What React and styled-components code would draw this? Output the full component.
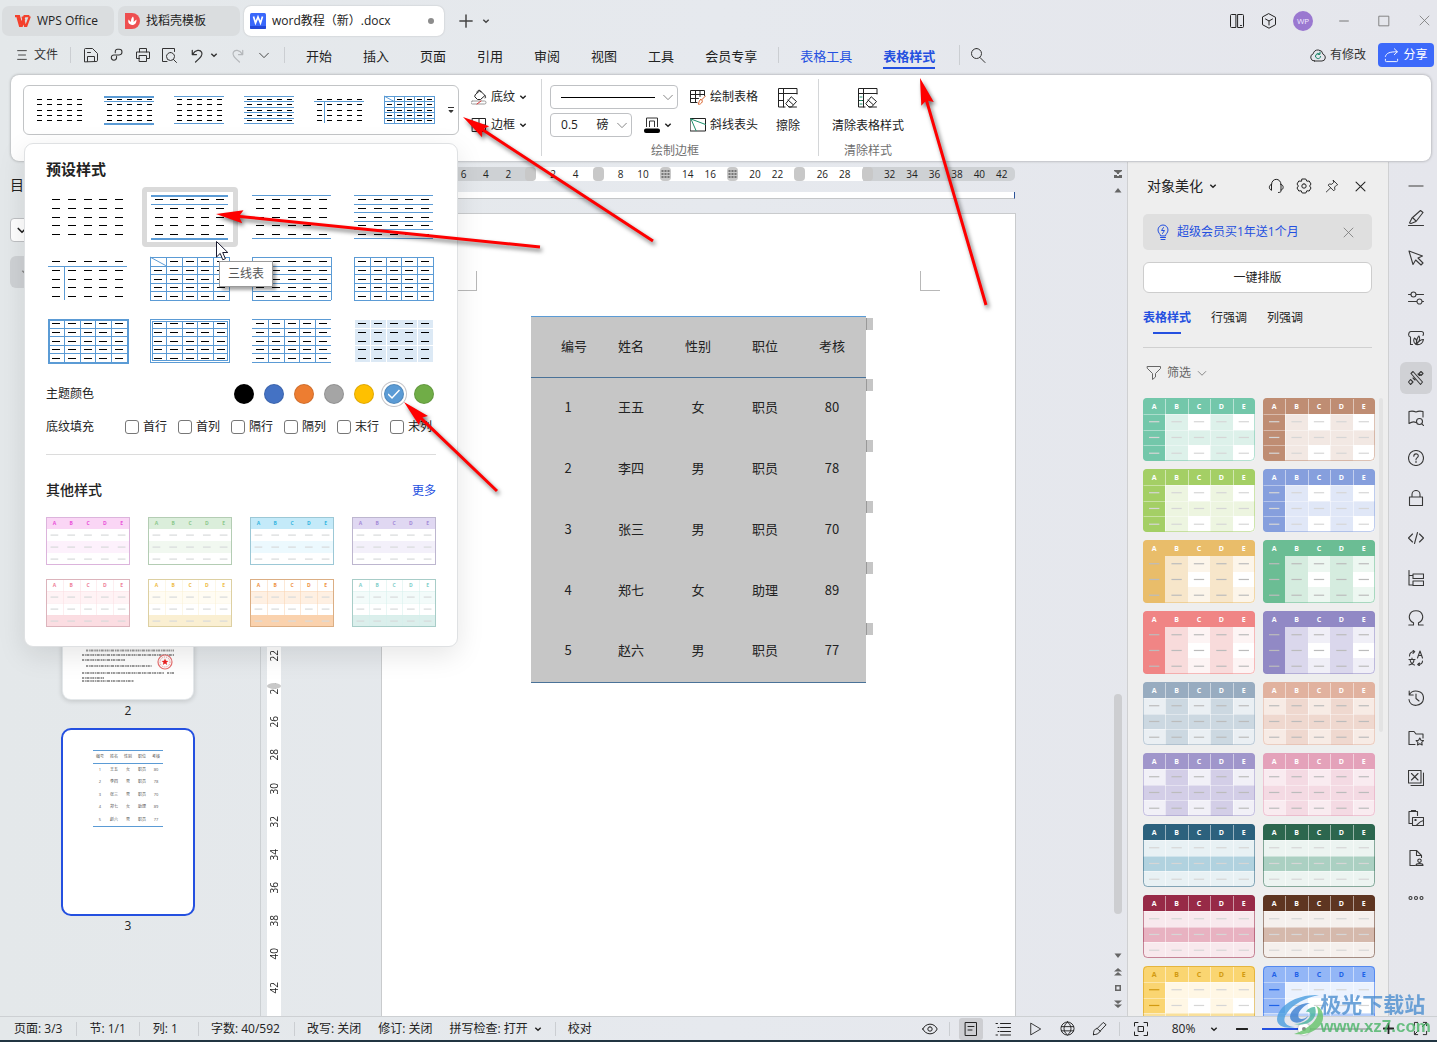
import React, { useState } from "react";
import styled, { createGlobalStyle, css } from "styled-components";

const BLUE = "#5b9bd5";
const ACCENT = "#2450e0";

const GlobalStyle = createGlobalStyle`
  * { box-sizing: border-box; }
  body {
    margin: 0;
    font-family: "Open Sans", "Noto Sans CJK SC", sans-serif;
    font-size: 12px;
    line-height: 18px;
    color: #222;
  }
  button, select, input {
    font: inherit;
    color: inherit;
    margin: 0;
    padding: 0;
    border: 0;
    background: none;
  }
  svg { display: block; flex: none; }
`;

/* ---------- icons ---------- */

const paths = {
  menu: "M3 3h10M4 8h8M3 13h10",
  save: "M1.5 14.5v-12a1 1 0 0 1 1-1h7l5 5v7a1 1 0 0 1-1 1zM4.5 14.5v-5h7v5M4.5 5.5h3",
  link: "M6 5.500v-1.500a2.500 2.500 0 0 1 2.500-2.500h2a3.200 3.200 0 0 1 0 6.400h-6a3 3 0 1 0 3 3v-1.400",
  printer: "M4.500 5v-3.500h7v3.500M4.500 11.500h-3v-6.500h13v6.500h-3M4.500 8.500h7v6h-7z",
  preview: "M6 14.500h-4.500v-13h12v3M9.500 5.500a4 4 0 1 1 0 8a4 4 0 1 1 0-8M12.500 12.500l3 3",
  undo: "M3.500 2.500v4.500h4.500M4 6.500c3-5 8-5 9.500-2s-1 5.500-6.500 10.500",
  redo: "M12.500 2.500v4.500h-4.500M12 6.500c-3-5-8-5-9.500-2s1 5.500 6.500 10.500",
  down: "M3 6l5 5 5-5",
  search: "M6.500 1.500a5 5 0 1 1 0 10a5 5 0 1 1 0-10M10 10.500l5 5",
  cloud: "M4.500 14h7.500a3.500 3.500 0 0 0 1-6.800a5 5 0 0 0-9.800-.4a3.700 3.700 0 0 0 1.300 7.200z",
  sync: "M10.500 9.500a2.500 2.500 0 1 1-1-2.500M7.800 7.300h2.200v-2.200",
  share: "M1.500 9c1-3.500 4-5 12.500-5M11 .8l3.300 3.200-3.300 3.200M1.500 12v1.500a1 1 0 0 0 1 1h11a1 1 0 0 0 1-1v-1.500",
  split: "M6.500 1.500h-4a1 1 0 0 0-1 1v11a1 1 0 0 0 1 1h4zM9 1.500h4.500a1 1 0 0 1 1 1v11a1 1 0 0 1-1 1h-4.500zM11.500 12.500h1",
  cube: "M8 .8l6.500 3.500v7.400l-6.500 3.500-6.500-3.500v-7.400zM4.500 6l3.500 2 3.500-2M8 8v4",
  minus: "M1 8h14",
  square: "M2.500 2.500h11v11h-11z",
  close: "M2.500 2.500l11 11M13.500 2.500l-11 11",
  plus: "M8 1v14M1 8h14",
  pail: "M4.500 5.500l4.500-4 5 5-4.500 4h-3l-2.500-2.500zM6 3.500c0-3 4-3 4-.5M14 6.500c1 1.500 1 2.500 0 2.500",
  pailBar: "M1.500 12h12a1.500 1.500 0 0 1 0 3h-12a1.500 1.500 0 0 1 0-3",
  border: "M1.500 1.500h13v13h-13zM8 1.500v13M1.500 8h13",
  drawTable: "M7 13.500h-6.500v-12h14v5M.5 5.500h14M.5 9.500h8M5.500 1.500v12M10 1.500v6",
  brush: "M15.500 7l-4 4M10.500 10.500c2 0 2.500 2 1 3.500s-3 1.500-3.500 1c1.500-1 .5-3.500 2.500-4.500",
  frame: "M.5 1.500h15v12.500h-15z",
  eraseTable: "M8 20h-6.500v-18.500h18.500v5.500M1.500 6.500h18.500M6.500 1.500v18.500M1.500 13.500h5M14.500 10l5 4.500-5 5.500h-2.500l-3-3zM11 13l5 4.500M12 20h7.500",
  headset: "M3.500 6.500c0-7 9.500-7 9.500 0M3.500 6.500v5.500M3.500 6.500c-3 0-3 5.500 0 5.500M13 6.500v6.500c0 1-1 1.500-2.500 1.500M13 6.500c3 0 3 5.500 0 5.500",
  gear: "M6.200 1h3.600l1 2.200 2.400-.2 1.800 3-1.400 2 1.400 2-1.800 3-2.400-.2-1 2.200h-3.600l-1-2.200-2.400.2-1.800-3 1.400-2-1.400-2 1.800-3 2.400.2zM8 5.800a2.200 2.200 0 1 1 0 4.400a2.200 2.200 0 1 1 0-4.400",
  pin: "M9.500 1.500l5 5-1.500.7-2 2 .2 3-1.200 1.300-6.500-6.500 1.300-1.200 3 .2 2-2zM6.500 10l-5 4.800",
  bulb: "M5.500 11.500c0-1.500-2.500-2.500-2.500-5.500a5 5 0 0 1 10 0c0 3-2.500 4-2.500 5.500zM5.500 13.500h5M6 15.500h4M8.500 3.500l-2 3h3l-2 3",
  filter: "M1.500 1.500h13v2l-5 5v3.500l-3 2.500v-6l-5-5z",
  pen: "M.5 15.500h15M1.500 13l2.500-5 8.500-7.500 2.500 2-7 9-5 2zM4.500 7.500l3.500 3.500",
  pointer: "M1 1l4 13.500 2.700-4.500 5.300 5 2-2-5-5 4.500-2z",
  sliders: "M.5 4.500h2.500M8 4.500h7.500M5.500 2a2.500 2.500 0 1 1 0 5a2.500 2.500 0 1 1 0-5M.5 11.500h8.500M14 11.500h1.500M11.500 9a2.500 2.500 0 1 1 0 5a2.500 2.500 0 1 1 0-5",
  shop: "M4.500 14.500h-2v-7.500c-3-.5-2-5.500.5-5.500h10.500c2 0 2.500 2 1.500 4M8 14.500c-3-2-2.500-5-1.500-6.500c2.500 1.500 2.500 4.500 1.500 6.500c.5-4 1-7 3-8.500c1.500 3 0 6.500-3 8.500c3 .5 6.500-.5 7.500-5c-3-.3-5 2-7.500 5",
  magic: "M3 3.500l2-2 9.500 10.500-2 2.500zM2.500 9.500l2.500 2.500-2.500 2.500-2-2.500zM13 1.500l2 2-2 2-2-2zM5 8l2 2M10 4l1.500 1.500",
  bookSearch: "M8 12.500c-2-1-4-1-7 1v-12c3-.8 5-.5 7 .5c2-1 4-1.300 7-.5v5.500M11.500 8.500a3 3 0 1 1 0 6a3 3 0 1 1 0-6M13.800 13.800l2 2",
  help: "M8 .5a7.500 7.500 0 1 1 0 15a7.500 7.500 0 1 1 0-15M5.800 6.200c0-3 4.500-3 4.500-.3c0 1.600-2.300 1.800-2.300 3.600M8 11v1.500",
  lock: "M1.500 7h13v8.500h-13zM4 7v-2.500a4 4 0 0 1 8 0v2.500",
  code: "M4.500 4l-4 4 4 4M11.500 4l4 4-4 4M9.500 2.500l-3 11",
  tree: "M1 .5v14.500h3.500M1 5.500h3.500M5 4h10.500v4.500h-10.500zM5 11h10.500v4.500h-10.500z",
  omega: "M.8 15h4.700v-2.200c-7-3.500-4.500-12 2.500-12s9.500 8.500 2.500 12v2.200h4.700",
  translate: "M1.500 6c0-3 2-4.500 5-4.500M5 .2l1.700 1.400-1.700 1.700M14.500 11c0 2.500-2 3.500-4.500 3.500M11.500 13l-1.800 1.500 1.800 1.300M9.500 8l2.500-7 2.500 7M10.500 5.500h3M1 9.500h6M4 8v1.500M6 9.500c0 3-2.500 5-5 5.500M2 9.500c.5 3 2.500 5 4.500 5.500",
  history: "M1.500 4.500c3-5.500 14-4.500 14 3.500c0 9-14 10-14.500 1.500M1.200 1v4h4M8 4v4.500l3 2.500",
  folderStar: "M7 14.500h-6v-13h5l2 2.500h7v4M11.800 8l1.200 2.300 2.500.3-1.800 1.700.5 2.600-2.400-1.200-2.300 1.200.4-2.600-1.800-1.700 2.500-.3z",
  boxX: "M.5 .5h12.500v12.500h-12.500zM3 15.500h12.500v-12.500M3.500 3.500l6.500 6.500M10 3.500l-6.500 6.500",
  clipImage: "M4 13.500h-3v-12h8.500v4M3.500 1.500v-1h4v1M4.500 7.500h11v8h-11zM7 9.500h1v1h-1zM8 15.500c2-1 3-4 7.500-5",
  docPerson: "M7 15.500h-5v-15h6.500l5 5v2M8.500 .5v5h5M11.500 9a1.700 1.700 0 1 1 0 3.400a1.700 1.700 0 1 1 0-3.400M8 15.500c0-2.500 7-2.500 7 0z",
  dots: "M2.500 6.500a1.500 1.500 0 1 1 0 3a1.500 1.500 0 1 1 0-3M8 6.500a1.500 1.500 0 1 1 0 3a1.500 1.500 0 1 1 0-3M13.500 6.500a1.500 1.500 0 1 1 0 3a1.500 1.500 0 1 1 0-3",
  eye: "M.8 8c3-6.500 11.400-6.500 14.400 0c-3 6.500-11.400 6.500-14.400 0zM8 5.800a2.200 2.200 0 1 1 0 4.400a2.200 2.200 0 1 1 0-4.400",
  page: "M2.500 1.500h11v13h-11zM5 5.500h6M5 9h4",
  list: "M5.500 2.500h10M5.500 6.500h10M5.500 10.500h10M5.500 14h10M1 2.500h1.500M3 6.500h1M3 10.500h1M1 14h1.500",
  play: "M3.500 1.500l11 6.500-11 6.500z",
  globe: "M8 1a7 7 0 1 1 0 14a7 7 0 1 1 0-14M8 1c-5 4-5 10 0 14c5-4 5-10 0-14M1.500 6h13M1.500 10.500h13",
  marker: "M1.500 14.500c0-4 1-6 4-6.500l6.500-6.500 3 2.500-6.500 7c-1.500 3-4 3.500-7 3.500zM5.500 8l3.500 3",
  fit: "M1.500 5v-3.500h3.500M11 1.500h3.500v3.500M14.500 11v3.500h-3.500M5 14.500h-3.500v-3.500M5.500 5.500h5v5h-5z",
  expand: "M1.500 5v-3.500h3.500M11 1.500h3.500v3.500M14.500 11v3.500h-3.500M5 14.500h-3.500v-3.500M10 6l4-4M6 10l-4 4",
};

function Icon({ name, size = 16, box = 16, color = "currentColor", weight = 1, children }) {
  return (
    <svg width={size} height={size} viewBox={`0 0 ${box} ${box}`} fill="none" stroke={color}
      strokeWidth={weight} strokeLinecap="round" strokeLinejoin="round" aria-hidden="true">
      <path d={paths[name]} />
      {children}
    </svg>
  );
}

const Caret = () => (
  <svg width="8" height="8" viewBox="0 0 8 8" fill="none" stroke="currentColor" strokeWidth="1.4" aria-hidden="true">
    <path d="M1.300 2.700l2.700 2.600 2.700-2.600" />
  </svg>
);

/* ---------- shared bits ---------- */

const PlainButton = styled.button`
  display: flex;
  align-items: center;
  justify-content: center;
  width: ${(p) => (p.$w ? `${p.$w}px` : "auto")};
  height: 24px;
  margin-left: ${(p) => p.$left || 0}px;
  gap: ${(p) => p.$gap || 0}px;
  color: ${(p) => p.$color || "inherit"};
  white-space: nowrap;
`;

const Rule = styled.span`
  width: 1px;
  height: ${(p) => p.$h || 16}px;
  background: #cbced2;
  margin: 0 ${(p) => p.$right || 0}px 0 ${(p) => p.$left || 0}px;
`;

const Spacer = styled.span`
  flex: 1;
`;

const Shell = styled.div`
  position: relative;
  display: flex;
  flex-direction: column;
  height: 100vh;
  overflow: hidden;
  background: linear-gradient(90deg, #e4e8ea 0%, #e6e9ee 50%, #e5e6ec 100%);
  border-bottom: 2px solid #213542;
`;

/* ---------- title bar ---------- */

const TitleBar = styled.header`
  display: flex;
  align-items: center;
  height: 41px;
  padding-left: 2px;
  gap: 4px;
`;

const DocTab = styled.div`
  display: flex;
  align-items: center;
  height: 30px;
  width: ${(p) => p.$w}px;
  padding: 0 10px 0 ${(p) => p.$pad}px;
  gap: 6px;
  border-radius: 7px;
  background: ${(p) => (p.$active ? "#fff" : "#dadddf")};
  box-shadow: ${(p) => (p.$active ? "0 0 2px rgba(0,0,0,.2)" : "none")};
  white-space: nowrap;
`;

const Dirty = styled.i`
  width: 6px;
  height: 6px;
  margin-left: auto;
  border-radius: 50%;
  background: #8c8c8c;
`;

const NewTab = styled.div`
  display: flex;
  gap: 2px;
  padding-left: 4px;
  color: #444;
`;

const Avatar = styled.button`
  width: 20px;
  height: 20px;
  margin: 0 4px 0 6px;
  border-radius: 50%;
  background: #9a78d0;
  color: #f0e8ff;
  font-size: 8px;
  line-height: 20px;
`;

const WindowButton = styled(PlainButton)`
  width: 26px;
  margin-left: 10px;
  color: #777;
`;

function TopTabs() {
  return (
    <TitleBar>
      <DocTab $w={112} $pad={13}>
        <svg width="16" height="12" viewBox="0 0 16 12" fill="none" stroke="#f4402c" strokeWidth="2.200">
          <path d="M0 1.200h4l2.500 8.500 3-8.500h4.800" />
          <path d="M2.500 2l2.500 8.800h1.800l2.500-7M7.500 1.500l2.500 9.300h1.300l3.500-9.500" />
        </svg>
        WPS Office
      </DocTab>
      <DocTab $w={122} $pad={7}>
        <svg width="15" height="16" viewBox="0 0 15 16">
          <path d="M0 0h7a8 8 0 0 1 0 16H0z" fill="#ee4f50" />
          <path d="M7 12c-4-1-4-3-3.500-5.500L6 9c0-3 .5-4 2-5.500 1 1.500 1 3.500.5 5.500l3-2.500c0 3-1 5.500-4.500 5.500z" fill="#fff" />
        </svg>
        找稻壳模板
      </DocTab>
      <DocTab $w={200} $pad={6} $active>
        <svg width="16" height="16" viewBox="0 0 16 16">
          <rect width="16" height="16" rx="1.500" fill="#3a68fb" />
          <path d="M0 13h16v2a1 1 0 0 1-1 1H1a1 1 0 0 1-1-1z" fill="#2448d8" />
          <path d="M3.500 3.500l2 6.500 2.500-6 2.500 6 2-6.500" fill="none" stroke="#fff" strokeWidth="1.700" />
        </svg>
        word教程（新）.docx
        <Dirty />
      </DocTab>
      <NewTab>
        <PlainButton $w={28} aria-label="新建"><Icon name="plus" size={14} weight={1.7} /></PlainButton>
        <PlainButton aria-label="标签列表"><Caret /></PlainButton>
      </NewTab>
      <Spacer />
      <PlainButton $w={28} aria-label="侧边栏"><Icon name="split" /></PlainButton>
      <PlainButton $w={28} aria-label="应用"><Icon name="cube" /></PlainButton>
      <Avatar>WP</Avatar>
      <WindowButton aria-label="最小化"><Icon name="minus" size={10} weight={1.6} /></WindowButton>
      <WindowButton aria-label="最大化"><Icon name="square" size={14} /></WindowButton>
      <WindowButton aria-label="关闭"><Icon name="close" size={13} /></WindowButton>
    </TitleBar>
  );
}

/* ---------- menu bar ---------- */

const MenuBar = styled.nav`
  display: flex;
  align-items: center;
  height: 28px;
  margin-bottom: 6px;
  padding: 0 3px 0 15px;
  color: #333;
`;

const MenuTab = styled.a`
  font-size: 13px;
  color: ${(p) => (p.$blue ? ACCENT : "#222")};
  font-weight: ${(p) => (p.$active ? 700 : 400)};
  text-decoration: none;
  margin-right: ${(p) => (p.$last ? 0 : 31)}px;
  white-space: nowrap;
  padding: 4px 0 2px;
  border-bottom: 2px solid ${(p) => (p.$active ? ACCENT : "transparent")};
  border-top: 2px solid transparent;
`;

const ShareButton = styled(PlainButton)`
  width: 56px;
  gap: 4px;
  border-radius: 4px;
  background: #3c69fa;
  color: #fff;
  margin-left: 12px;
`;

function Menu() {
  return (
    <MenuBar>
      <PlainButton $gap={5}><Icon name="menu" size={14} />文件</PlainButton>
      <Rule $left={12} $right={7} />
      <PlainButton $w={26} aria-label="保存"><Icon name="save" /></PlainButton>
      <PlainButton $w={26} aria-label="输出"><Icon name="link" size={14} weight={1.2} /></PlainButton>
      <PlainButton $w={26} aria-label="打印"><Icon name="printer" /></PlainButton>
      <PlainButton $w={26} aria-label="打印预览"><Icon name="preview" /></PlainButton>
      <PlainButton $w={28} aria-label="撤销"><Icon name="undo" size={15} weight={1.3} /></PlainButton>
      <PlainButton aria-label="撤销列表"><Caret /></PlainButton>
      <PlainButton $w={40} $color="#b4b7ba" aria-label="重做"><Icon name="redo" size={15} weight={1.3} /></PlainButton>
      <PlainButton $w={12} aria-label="更多工具"><Icon name="down" size={14} /></PlainButton>
      <Rule $left={14} $right={21} />
      {["开始", "插入", "页面", "引用", "审阅", "视图", "工具"].map((t) => (
        <MenuTab key={t} href="#">{t}</MenuTab>
      ))}
      <MenuTab href="#" $last>会员专享</MenuTab>
      <Rule $left={21} $right={21} />
      <MenuTab href="#" $blue>表格工具</MenuTab>
      <MenuTab href="#" $blue $active $last>表格样式</MenuTab>
      <Rule $left={24} $right={10} $h={20} />
      <PlainButton aria-label="搜索"><Icon name="search" /></PlainButton>
      <Spacer />
      <PlainButton $gap={4}>
        <Icon name="cloud"><path d={paths.sync} stroke="#108060" /></Icon>
        有修改
      </PlainButton>
      <ShareButton><Icon name="share" size={15} />分享</ShareButton>
    </MenuBar>
  );
}

/* ---------- table style glyphs ---------- */

const five = [0, 1, 2, 3, 4];

// 5x5 preview of a border preset; `kind` picks the ruled lines
function TableGlyph({ kind, w, h }) {
  const cw = w / 5;
  const rh = h / 5;
  const px = (n) => Math.round(n);
  const hLine = (i, t = 1) => <rect key={`h${i}`} x="0" y={px(i * rh)} width={w} height={t} />;
  const vLine = (i, from = 0) => <rect key={`v${i}`} x={px(i * cw)} y={from} width="1" height={h - from} />;
  const inner = [1, 2, 3, 4];
  const all = [0, 1, 2, 3, 4, 5];
  const gridded = ["diag", "grid", "thick", "double"].includes(kind);
  return (
    <svg width={w + 4} height={h + 4} viewBox={`-2 -2 ${w + 4} ${h + 4}`} shapeRendering="crispEdges" aria-hidden="true">
      <g fill={BLUE}>
        {kind === "three" && <>{hLine(0, 2)}{hLine(1)}{hLine(5, 2)}</>}
        {kind === "ends" && <>{hLine(0)}{hLine(5)}</>}
        {(kind === "rows" || kind === "boxrows") && all.map((i) => hLine(i))}
        {kind === "boxrows" && <>{vLine(0)}{vLine(5)}</>}
        {kind === "head" && <>{hLine(1)}{vLine(1, px(rh))}</>}
        {gridded && inner.map((i) => hLine(i))}
        {gridded && inner.map((i) => vLine(i))}
        {kind === "open" && <>{all.map((i) => hLine(i))}{inner.map((i) => vLine(i))}</>}
      </g>
      {kind === "double" && <rect x="1.500" y="1.500" width={w - 2} height={h - 2} fill="none" stroke="#fff" />}
      {gridded && (
        <rect x="0.500" y="0.500" width={w} height={h} fill="none" stroke={BLUE} strokeWidth={kind === "thick" ? 2 : 1} />
      )}
      {kind === "double" && <rect x="2.500" y="2.500" width={w - 4} height={h - 4} fill="none" stroke={BLUE} />}
      {kind === "diag" && <path d={`M0 0L${cw} ${rh}`} stroke={BLUE} shapeRendering="auto" />}
      {kind === "fill" && five.map((r) => five.map((c) => (
        <rect key={`${r}${c}`} x={px(c * cw) + 1} y={px(r * rh) + 1} width={px(cw) - 1} height={px(rh) - 1} fill="#dce9f5" />
      )))}
      {five.map((r) => five.map((c) => {
        if (kind === "diag" && r === 0 && c === 0) return null;
        return <rect key={`d${r}${c}`} x={px(c * cw + cw / 4)} y={px(r * rh + rh / 2)} width={px(cw / 2)} height="1" fill="#000" />;
      }))}
    </svg>
  );
}

// Coloured table thumbnail. `rows` holds three rows of five fills.
function Swatch({ w, h, head, letter, rows, lines, headLines, edge, dash, firstDash, radius }) {
  const cw = w / 5;
  const rh = h / 4;
  const big = w > 100;
  const size = big ? 7 : 5;
  const id = `clip${head}${letter}`.replace(/#/g, "");
  return (
    <svg width={w} height={h} viewBox={`0 0 ${w} ${h}`} aria-hidden="true">
      <clipPath id={id}><rect width={w} height={h} rx={radius} /></clipPath>
      <g clipPath={`url(#${id})`}>
        <g shapeRendering="crispEdges">
          <rect width={w} height={Math.ceil(rh)} fill={head} />
          {rows.map((cells, r) => cells.map((fill, c) => (
            <rect key={`${r}${c}`} x={Math.round(c * cw)} y={Math.round((r + 1) * rh)} width={Math.ceil(cw)} height={Math.ceil(rh)} fill={fill} />
          )))}
          {[1, 2, 3, 4].map((c) => (
            <rect key={c} x={Math.round(c * cw)} y={headLines ? 1 : rh} width="1" height={h - (headLines ? 1 : rh)} fill={lines} opacity=".5" />
          ))}
          {[1, 2, 3].map((r) => <rect key={r} y={Math.round(r * rh)} width={w} height="1" fill={lines} opacity=".4" />)}
        </g>
        {five.map((c) => (
          <text key={c} x={(c + 0.5) * cw} y={rh / 2 + (big ? 3 : 2)} fontSize={size} fontWeight="700" textAnchor="middle" fill={letter}>
            {"ABCDE"[c]}
          </text>
        ))}
        {rows.map((cells, r) => cells.map((fill, c) => (
          <rect key={`${r}${c}`} x={(c + 0.27) * cw} y={(r + 1.5) * rh - 0.5} width={cw * 0.46} height="1.200"
            fill={c === 0 && firstDash ? firstDash : dash} />
        )))}
      </g>
      <rect x=".5" y=".5" width={w - 1} height={h - 1} rx={radius} fill="none" stroke={edge} />
    </svg>
  );
}

/* ---------- ribbon ---------- */

const RibbonBar = styled.section`
  position: relative;
  z-index: 3;
  display: flex;
  height: 86px;
  margin: 0 6px 1px 11px;
  padding: 10px 12px 0;
  border-radius: 8px;
  background: #fff;
  box-shadow: 0 0 3px rgba(0, 0, 0, 0.35);
  white-space: nowrap;
`;

const Gallery = styled.div`
  display: flex;
  align-items: center;
  width: 436px;
  height: 50px;
  margin-right: 12px;
  border: 1px solid #c2c4c6;
  border-radius: 6px;
`;

const GalleryItem = styled(PlainButton)`
  width: 70px;
  height: 40px;
  padding-bottom: 1px;
`;

const Group = styled.div`
  display: flex;
  flex-direction: column;
  align-items: center;
`;

const GroupBody = styled.div`
  display: flex;
  gap: 12px;
  height: 52px;
  margin-bottom: 5px;
`;

const Caption = styled.span`
  color: #707070;
`;

const Stack = styled.div`
  display: flex;
  flex-direction: column;
  align-items: flex-start;
  gap: 4px;
`;

const Row = styled.div`
  display: flex;
  gap: 12px;
`;

const BigButton = styled.button`
  display: flex;
  flex-direction: column;
  align-items: center;
  justify-content: space-between;
  padding: 2px 0;
  margin-left: ${(p) => p.$left || 0}px;
`;

const GroupRule = styled.span`
  width: 1px;
  height: 77px;
  margin: -6px ${(p) => p.$right}px 0 ${(p) => p.$left}px;
  background: #d4d6d8;
`;

const Combo = styled.label`
  position: relative;
  display: flex;
  align-items: center;
  justify-content: space-between;
  width: ${(p) => p.$w}px;
  height: 24px;
  padding: 0 2px 0 10px;
  border: 1px solid #bfc1c4;
  border-radius: 4px;
  background: #fff;
  select {
    flex: 1;
    appearance: none;
    outline: none;
  }
`;

const HiddenSelect = styled.select`
  position: absolute;
  inset: 0;
  opacity: 0;
`;

const LineSample = styled.span`
  flex: 1;
  height: 1px;
  margin-right: 6px;
  background: #000;
`;

function Ribbon() {
  return (
    <RibbonBar>
      <Gallery>
        {["none", "three", "ends", "rows", "head", "diag"].map((k) => (
          <GalleryItem key={k} aria-label={k}><TableGlyph kind={k} w={50} h={27} /></GalleryItem>
        ))}
        <PlainButton $w={14} aria-label="展开样式">
          <svg width="8" height="8" viewBox="0 0 8 8"><path d="M1 1.500h6M2 4.500h4l-2 2z" stroke="#333" fill="#333" /></svg>
        </PlainButton>
      </Gallery>
      <Stack>
        <PlainButton $gap={4}>
          <Icon name="pail"><path d={paths.pailBar} stroke="#999" /><path d="M6 15l4-3" stroke="#d33" /></Icon>底纹<Caret />
        </PlainButton>
        <PlainButton $gap={4}><Icon name="border" />边框<Caret /></PlainButton>
      </Stack>
      <GroupRule $left={14} $right={8} />
      <Group>
        <GroupBody>
          <Stack>
            <Combo $w={128}>
              <LineSample />
              <Icon name="down" size={14} color="#777" />
              <HiddenSelect aria-label="线型"><option>实线</option></HiddenSelect>
            </Combo>
            <Row>
              <Combo $w={82}>
                <select aria-label="线宽"><option>{"0.5\u00a0\u00a0\u00a0\u00a0\u00a0\u00a0磅"}</option></select>
                <Icon name="down" size={14} color="#777" />
              </Combo>
              <PlainButton $gap={4} aria-label="边框颜色">
                <svg width="16" height="16" viewBox="0 0 16 16" fill="none" stroke="#333">
                  <path d="M2.500 10v-9h11v9M5.500 10v-6h5v6" />
                  <rect x="0" y="11.500" width="16" height="4.500" rx="2" fill="#000" stroke="none" />
                </svg>
                <Caret />
              </PlainButton>
            </Row>
          </Stack>
          <Stack>
            <PlainButton $gap={4}><Icon name="drawTable"><path d={paths.brush} stroke="#d9622b" /></Icon>绘制表格</PlainButton>
            <PlainButton $gap={4}>
              <Icon name="frame"><path d="M1 2l5 11.500M1 2l14.500 5.500" stroke="#1a8f6b" /></Icon>斜线表头
            </PlainButton>
          </Stack>
          <BigButton $left={6}><Icon name="eraseTable" size={22} box={22} />擦除</BigButton>
        </GroupBody>
        <Caption>绘制边框</Caption>
      </Group>
      <GroupRule $left={18} $right={13} />
      <Group>
        <GroupBody>
          <BigButton>
            <Icon name="eraseTable" size={22} box={22}><path d="M3 10h2M3 13.500h2M3 17h2" stroke="#1a8f6b" /></Icon>
            清除表格样式
          </BigButton>
        </GroupBody>
        <Caption>清除样式</Caption>
      </Group>
      <StylePopup />
    </RibbonBar>
  );
}

/* ---------- preset popup ---------- */

const Popup = styled.div`
  position: absolute;
  z-index: 5;
  top: 68px;
  left: 13px;
  width: 434px;
  padding: 15px 21px 19px;
  border: 1px solid #dfe1e3;
  border-radius: 9px;
  background: #fff;
  box-shadow: 0 8px 28px rgba(0, 0, 0, 0.1);
`;

const PopupTitle = styled.h2`
  margin: 0;
  font-size: ${(p) => p.$size}px;
  line-height: 20px;
  font-weight: ${(p) => (p.$size > 14 ? 700 : 500)};
`;

const PresetGrid = styled.div`
  display: grid;
  grid-template-columns: repeat(4, 96px);
  gap: 2px 6px;
  margin: 8px -6px 11px;
`;

const Preset = styled.button`
  display: flex;
  align-items: center;
  justify-content: center;
  height: 60px;
  padding: 0 2px 2px 0;
  border: 5px solid ${(p) => (p.$on ? "#dadada" : "transparent")};
  border-radius: 4px;
`;

const OptionRow = styled.div`
  display: flex;
  align-items: center;
  height: ${(p) => p.$h}px;
  padding-right: 2px;
`;

const Colors = styled.div`
  display: flex;
  gap: 10px;
  margin-left: auto;
`;

const Color = styled.label`
  position: relative;
  width: 20px;
  height: 20px;
  border-radius: 50%;
  background: ${(p) => p.$color};
  ${(p) => p.$on && css`box-shadow: 0 0 0 2px #fff, 0 0 0 3px #c4c4c8;`}
  border: 1px solid rgba(0, 0, 0, 0.12);
  input { position: absolute; opacity: 0; }
  svg { margin: 3px; }
`;

const Tick = styled.label`
  display: flex;
  align-items: center;
  gap: 4px;
  width: 53px;
  white-space: nowrap;
  input {
    appearance: none;
    width: 14px;
    height: 14px;
    border: 1px solid #777;
    border-radius: 3px;
    background: #fff;
  }
  input:checked { background: ${ACCENT}; }
`;

const Ticks = styled.div`
  display: flex;
  margin: 0 -10px 0 31px;
`;

const PopupRule = styled.hr`
  height: 1px;
  margin: 7px 0 25px;
  border: 0;
  background: #dcdcdc;
`;

const OtherHead = styled.div`
  display: flex;
  justify-content: space-between;
  height: 20px;
  margin-bottom: 17px;
`;

const MoreLink = styled.a`
  line-height: 22px;
  color: ${ACCENT};
  text-decoration: none;
`;

const OtherGrid = styled.div`
  display: grid;
  grid-template-columns: repeat(4, 84px);
  gap: 14px 18px;
`;

const SwatchButton = styled.button`
  display: block;
`;

const Tooltip = styled.div`
  position: absolute;
  top: 117px;
  left: 194px;
  padding: 3px 8px;
  border: 1px solid #9a9a9a;
  background: #fff;
  color: #575757;
  box-shadow: 3px 3px 3px rgba(0, 0, 0, 0.35);
`;

const Cursor = styled.svg`
  position: absolute;
  top: 97px;
  left: 191px;
`;

const presets = ["none", "three", "ends", "rows", "head", "diag", "boxrows", "grid", "thick", "double", "open", "fill"];
const themeColors = ["#000000", "#4472c4", "#ed7d31", "#a5a5a5", "#ffc000", "#5b9bd5", "#70ad47"];
const fills = ["首行", "首列", "隔行", "隔列", "末行", "末列"];

const row = (c) => [c, c, c, c, c];

const others = [
  { head: "#fad6f5", letter: "#e94fd8", mid: "#fdf1fc", edge: "#dcb4dc" },
  { head: "#dbeedb", letter: "#8cc88c", mid: "#f1f8f0", edge: "#b4cdb4" },
  { head: "#c4eaf9", letter: "#35b5e0", mid: "#ecf9fe", edge: "#9cc8d6" },
  { head: "#e0d8f2", letter: "#a48ad8", mid: "#f3f0fa", edge: "#bdb6cf" },
  { letter: "#ee7f98", first: "#fff3f5", last: "#fbdde2", edge: "#dcb4bc", lines: "#fbdde2" },
  { letter: "#eebb45", first: "#fffcf3", last: "#faefd2", edge: "#ddd0a2", lines: "#faefd2" },
  { letter: "#ee9140", first: "#fef0e3", last: "#fad2ae", edge: "#dbae84", lines: "#fad2ae" },
  { letter: "#82cec9", first: "#f3fbfa", last: "#dbefec", edge: "#a8cdc8", lines: "#d4efec" },
];

function StylePopup() {
  const [preset, setPreset] = useState("three");
  const [theme, setTheme] = useState(BLUE);

  return (
    <Popup>
      <PopupTitle $size={15}>预设样式</PopupTitle>
      <PresetGrid>
        {presets.map((k) => (
          <Preset key={k} $on={k === preset} onClick={() => setPreset(k)} aria-label={k}>
            <TableGlyph kind={k} w={k === "three" ? 77 : 79} h={43} />
          </Preset>
        ))}
      </PresetGrid>
      <OptionRow $h={24}>
        主题颜色
        <Colors>
          {themeColors.map((c) => (
            <Color key={c} $color={c} $on={c === theme}>
              <input type="radio" name="theme" aria-label={c} checked={c === theme} onChange={() => setTheme(c)} />
              {c === theme && (
                <svg width="12" height="12" viewBox="0 0 12 12" fill="none" stroke="#fff" strokeWidth="1.500"><path d="M0 6l4 4 7.500-8" /></svg>
              )}
            </Color>
          ))}
        </Colors>
      </OptionRow>
      <OptionRow $h={41}>
        底纹填充
        <Ticks>
          {fills.map((f) => <Tick key={f}><input type="checkbox" />{f}</Tick>)}
        </Ticks>
      </OptionRow>
      <PopupRule />
      <OtherHead>
        <PopupTitle $size={14}>其他样式</PopupTitle>
        <MoreLink href="#">更多</MoreLink>
      </OtherHead>
      <OtherGrid>
        {others.map((o) => (
          <SwatchButton key={o.letter} aria-label="表格样式">
            <Swatch w={84} h={48} radius={0} head={o.head || "#fff"} letter={o.letter} edge={o.edge} dash="#d8dadb"
              rows={o.head ? [row("#fff"), row(o.mid), row("#fff")] : [row(o.first), row("#fff"), row(o.last)]}
              lines={o.lines || "none"} headLines={!o.head} />
          </SwatchButton>
        ))}
      </OtherGrid>
      <Tooltip role="tooltip">三线表</Tooltip>
      <Cursor width="13" height="20" viewBox="0 0 13 20">
        <path d="M.5 .5v15.500l3.700-3.600 2.600 6.400 2.600-1.100-2.700-6.200h5.100z" fill="#fff" stroke="#1a1a30" />
      </Cursor>
    </Popup>
  );
}

/* ---------- navigation pane ---------- */

const Body = styled.div`
  display: flex;
  flex: 1;
  min-height: 0;
`;

const NavPane = styled.aside`
  width: 261px;
  padding: 14px 0 0 10px;
  border-right: 1px solid #ccd0d3;
  overflow: hidden;
`;

const NavTitle = styled.h2`
  margin: 0 0 24px;
  font-size: 14px;
  line-height: 18px;
  font-weight: 400;
`;

const NavCombo = styled(Combo)`
  justify-content: flex-start;
  margin-bottom: 14px;
  padding-left: 5px;
`;

const NavItem = styled(PlainButton)`
  width: 240px;
  height: 32px;
  justify-content: flex-start;
  padding-left: 11px;
  border-radius: 6px;
  background: #cfd2d5;
  color: #888;
  margin-bottom: 10px;
`;

const Thumbs = styled.ol`
  margin: 0;
  padding: 0 14px 0 0;
  list-style: none;
  display: flex;
  flex-direction: column;
  align-items: center;
`;

const Thumb = styled.div`
  width: 134px;
  height: 188px;
  padding: 20px 30px;
  border: 2px solid ${(p) => (p.$on ? ACCENT : "transparent")};
  border-radius: 10px;
  background: #fff;
  background-clip: padding-box;
  box-shadow: ${(p) => (p.$on ? "none" : "0 1px 4px rgba(0,0,0,.12)")};
`;

const ThumbLabel = styled.div`
  height: 27px;
  line-height: 19px;
  text-align: center;
`;

const MiniTable = styled.div`
  display: grid;
  grid-template-columns: repeat(5, 1fr);
  grid-auto-rows: 1fr;
  height: 77px;
  border: solid ${BLUE};
  border-width: 1px 0;
  font-size: 4px;
  line-height: 12px;
  text-align: center;
  color: #555;
  span:nth-child(-n + 5) { border-bottom: 1px solid ${BLUE}; }
`;

const MiniPage = styled.div`
  display: flex;
  justify-content: center;
  padding-top: 112px;
`;

const records = [
  ["编号", "姓名", "性别", "职位", "考核"],
  ["1", "王五", "女", "职员", "80"],
  ["2", "李四", "男", "职员", "78"],
  ["3", "张三", "男", "职员", "70"],
  ["4", "郑七", "女", "助理", "89"],
  ["5", "赵六", "男", "职员", "77"],
];

function Navigation() {
  return (
    <NavPane>
      <NavTitle>目录</NavTitle>
      <NavCombo $w={120}>
        <Icon name="down" size={12} weight={2.2} />
        <HiddenSelect aria-label="视图"><option>缩略图</option></HiddenSelect>
      </NavCombo>
      <NavItem aria-label="展开"><Caret /></NavItem>
      <Thumbs>
        <li><Thumb /><ThumbLabel>1</ThumbLabel></li>
        <li>
          <Thumb>
            <MiniPage>
              <svg width="94" height="42" viewBox="0 0 94 42">
                <g stroke="#999" strokeWidth="2" strokeDasharray="2 .8 1 .6 3 .9 1.500 .5">
                  <path d="M5 3.500h88M1 8h92M1 13h43M5 19h66M1 26h82M86 26h7M1 31h22M1 34h52" />
                </g>
                <g fill="none" stroke="#e77070" strokeWidth="1.200">
                  <circle cx="84" cy="15" r="7" fill="#fff" />
                  <circle cx="84" cy="15" r="5" strokeWidth=".8" strokeDasharray="1 1" />
                  <path d="M84 11.500l1 2.300 2.400.1-1.900 1.600.7 2.400-2.200-1.300-2.200 1.300.7-2.400-1.900-1.600 2.400-.1z" fill="#e22" stroke="none" />
                </g>
              </svg>
            </MiniPage>
          </Thumb>
          <ThumbLabel>2</ThumbLabel>
        </li>
        <li>
          <Thumb $on>
            <MiniTable>
              {records.flat().map((t, i) => <span key={i}>{t}</span>)}
            </MiniTable>
          </Thumb>
          <ThumbLabel>3</ThumbLabel>
        </li>
      </Thumbs>
    </NavPane>
  );
}

/* ---------- document ---------- */

const VRuler = styled.div`
  width: 14px;
  margin-left: 6px;
  padding-top: 145px;
  overflow: hidden;
  background: #fff;
`;

const VScale = styled.div`
  display: grid;
  grid-auto-rows: 1fr;
  height: 697px;
  font-size: 10px;
  line-height: 14px;
`;

const VTick = styled.div`
  position: relative;
  display: flex;
  align-items: center;
  justify-content: center;
  span {
    writing-mode: vertical-rl;
    transform: rotate(180deg);
  }
  i {
    position: absolute;
    top: 11px;
    width: 14px;
    height: 6px;
    border-radius: 50%;
    background: #c8c8c8;
  }
`;

const Canvas = styled.main`
  flex: 1;
  display: flex;
  flex-direction: column;
  align-items: center;
  min-width: 0;
  padding-left: 2px;
`;

const HRuler = styled.div`
  display: grid;
  grid-auto-flow: column;
  grid-auto-columns: 1fr;
  flex: none;
  width: 634px;
  height: 14px;
  margin: 5px 0 11px;
  padding: 0 2px 0 4px;
  border-radius: 5px;
  background: linear-gradient(90deg, #ced1d4 24%, #fff 24% 76%, #ced1d4 76%);
  font-size: 10px;
  line-height: 14px;
`;

const HTick = styled.div`
  display: flex;
  align-items: center;
  justify-content: center;
`;

const Stop = styled.i`
  width: 11px;
  height: 14px;
  border-radius: 4px;
  background: #c8c8c8;
`;

const PrevPage = styled.div`
  flex: none;
  width: 634px;
  height: 7px;
  margin-bottom: 14px;
  border-right: 1px solid #2a5298;
  border-bottom: 1px solid #c4c6c8;
  background: #fff;
`;

const Page = styled.article`
  flex: 1;
  width: 635px;
  border: 1px solid #c9cbcd;
  border-bottom: 0;
  background: #fff;
`;

const Margins = styled.div`
  display: flex;
  align-items: flex-end;
  justify-content: space-between;
  height: 77px;
  margin-bottom: 25px;
  padding: 0 75px;
`;

const Corner = styled.span`
  width: 20px;
  height: 20px;
  border-bottom: 1px solid #b8b8b8;
  border-${(p) => p.$side}: 1px solid #b8b8b8;
`;

const DocTable = styled.table`
  width: 335px;
  margin: 0 auto;
  border-collapse: collapse;
  table-layout: fixed;
  border-top: 1px solid ${BLUE};
  border-bottom: 1px solid #4a7298;
  background: #c6c6c6;
  font-family: "Noto Sans CJK SC", sans-serif;
  font-size: 13px;
  text-align: center;
  thead { border-bottom: 1px solid #4a7298; }
  th, td {
    position: relative;
    height: 61px;
    padding: 0 0 3px;
    font-weight: 400;
  }
  th:first-child { padding-left: 20px; }
  td:first-child { padding-left: 8px; }
`;

const RowHandle = styled.i`
  position: absolute;
  top: 1px;
  right: -7px;
  width: 7px;
  height: 12px;
  border-left: 1px solid #999;
  background: #c6c6c6;
`;

const ScrollColumn = styled.div`
  display: flex;
  flex-direction: column;
  align-items: center;
  gap: 8px;
  width: 14px;
  padding: 8px 5px 8px 0;
  color: #666;
`;

const Track = styled.div`
  display: flex;
  flex-direction: column;
  flex: 1;
  &::before { content: ""; flex: 499; }
  &::after { content: ""; flex: 30; }
`;

const ScrollThumb = styled.div`
  flex: 224;
  width: 8px;
  border-radius: 4px;
  background: #cdced1;
`;

const Mark = ({ d }) => (
  <svg width="8" height="8" viewBox="0 0 8 8" fill="currentColor" aria-hidden="true"><path d={d} fillRule="evenodd" /></svg>
);

const hTicks = [];
for (let n = -12; n <= 42; n += 2) hTicks.push(n);
const vTicks = [];
for (let n = 2; n <= 42; n += 2) vTicks.push(n);

function GridStop() {
  return (
    <svg width="11" height="14" viewBox="0 0 11 14">
      <rect width="11" height="14" rx="4" fill="#c8c8c8" />
      <path d="M1.500 4h8M1.500 7h8M1.500 10h8" stroke="#777" strokeWidth="2" strokeDasharray="2 1" />
    </svg>
  );
}

function Document() {
  const [head, ...rows] = records;
  return (
    <>
      <VRuler>
        <VScale>
          {vTicks.map((n) => <VTick key={n}><span>{n}</span>{n === 24 && <i />}</VTick>)}
        </VScale>
      </VRuler>
      <Canvas>
        <HRuler>
          {hTicks.map((n) => (
            <HTick key={n}>
              {[0, 6, 24, 30].includes(n) ? <Stop /> : n === 12 || n === 18 ? <GridStop /> : Math.abs(n)}
            </HTick>
          ))}
        </HRuler>
        <PrevPage />
        <Page>
          <Margins><Corner $side="right" /><Corner $side="left" /></Margins>
          <DocTable>
            <thead>
              <tr>{head.map((t, i) => <th key={t}>{t}{i === 4 && <RowHandle />}</th>)}</tr>
            </thead>
            <tbody>
              {rows.map((r) => (
                <tr key={r[0]}>{r.map((t, i) => <td key={i}>{t}{i === 4 && <RowHandle />}</td>)}</tr>
              ))}
            </tbody>
          </DocTable>
        </Page>
      </Canvas>
      <ScrollColumn>
        <Mark d="M0 0h8v1L5 3v1H3V3L0 1zM0 5h3v1h2V5h3v3H0z" />
        <Mark d="M4 2l3.500 4.500h-7z" />
        <Track><ScrollThumb /></Track>
        <Mark d="M4 6L.5 1.500h7z" />
        <Mark d="M4 0l4 3.500H0zM4 4l4 3.500H0z" />
        <Mark d="M1 1h6v6H1zM2.500 2.500v3h3v-3z" />
        <Mark d="M4 4L0 .5h8zM4 8L0 4.500h8z" />
      </ScrollColumn>
    </>
  );
}

/* ---------- beautify pane ---------- */

const Pane = styled.aside`
  width: 262px;
  padding: 12px 0 0 15px;
  border: solid #cfd0d2;
  border-width: 0 1px;
  background: #eeeeee;
  overflow: hidden;
`;

const PaneHead = styled.div`
  display: flex;
  align-items: center;
  height: 24px;
  padding: 0 14px 0 4px;
  margin-bottom: 16px;
`;

const PaneTitle = styled.button`
  display: flex;
  align-items: center;
  gap: 6px;
  font-size: 14px;
`;

const Promo = styled.div`
  display: flex;
  align-items: center;
  width: 229px;
  height: 36px;
  margin-bottom: 12px;
  padding: 0 12px;
  gap: 6px;
  border-radius: 5px;
  background: #dfdfdf;
  color: ${ACCENT};
`;

const LayoutButton = styled.button`
  display: block;
  width: 229px;
  height: 31px;
  border: 1px solid #cdcdcd;
  border-radius: 6px;
  background: #fff;
  margin-bottom: 13px;
`;

const PaneTabs = styled.div`
  display: flex;
  gap: 20px;
  width: 229px;
  height: 42px;
  margin-bottom: 15px;
  border-bottom: 1px solid #d0d0d0;
`;

const PaneTab = styled.button`
  display: flex;
  flex-direction: column;
  align-items: center;
  gap: 3px;
  height: 28px;
  line-height: 23px;
  ${(p) => p.$on && css`
    color: ${ACCENT};
    font-weight: 700;
    &::after {
      content: "";
      flex: none;
      width: 28px;
      height: 2px;
      background: ${ACCENT};
    }
  `}
`;

const Filter = styled.button`
  display: flex;
  align-items: center;
  gap: 5px;
  height: 20px;
  margin: 0 0 15px 3px;
  color: #666;
`;

const StyleList = styled.div`
  display: flex;
  gap: 4px;
`;

const StyleGrid = styled.div`
  display: grid;
  grid-template-columns: 112px 112px;
  gap: 8px;
`;

const ListBar = styled.span`
  width: 4px;
  height: 334px;
  border-radius: 2px;
  background: #e3e3e3;
`;

const W = "#ffffff";
const patterns = {
  checker: (c) => [[c.main, c.mid, W, c.mid, W], [c.main, ...row(c.mid).slice(1)], [c.main, c.mid, W, c.mid, W]],
  columns: (c) => [[c.main, c.mid, c.low, c.mid, c.low], [c.main, c.mid, W, c.mid, W], [c.main, c.mid, c.low, c.mid, c.low]],
  cross: (c) => [[c.low, c.mid, c.low, c.mid, c.low], row(c.mid), [c.low, c.mid, c.low, c.mid, c.low]],
  band: (c) => [row(c.low), row(c.mid), row(c.low)],
  total: (c) => [[c.main, c.low, c.low, c.low, c.low], [c.main, c.low, W, c.low, W], row(c.mid)],
};

const tableStyles = [
  { type: "checker", main: "#73c7aa", mid: "#ddf1ea" },
  { type: "checker", main: "#bf8d73", mid: "#f2e8e3" },
  { type: "checker", main: "#a4cf65", mid: "#edf5e0" },
  { type: "checker", main: "#869fdd", mid: "#e0e7f7" },
  { type: "columns", main: "#e9bd6a", mid: "#f7e6ca", low: "#fcf5ea" },
  { type: "columns", main: "#6bbd94", mid: "#d5ecdf", low: "#edf7f1" },
  { type: "columns", main: "#f08585", mid: "#f8dbdb", low: "#fdf4f4" },
  { type: "columns", main: "#9189c5", mid: "#dad7ec", low: "#f0eff7" },
  { type: "cross", main: "#98acc0", mid: "#ccd8e1", low: "#eaeff3" },
  { type: "cross", main: "#e1b29f", mid: "#efd8cf", low: "#f7ebe5" },
  { type: "cross", main: "#a096cb", mid: "#d3cee7", low: "#f1f0f7" },
  { type: "cross", main: "#e4a2ba", mid: "#f4dae3", low: "#f9ebf0" },
  { type: "band", main: "#2c617d", mid: "#b1d2df", low: "#e8f1f4" },
  { type: "band", main: "#2c664e", mid: "#abd0c2", low: "#ecf4f1" },
  { type: "band", main: "#972a47", mid: "#e8b2c1", low: "#f8e9ed" },
  { type: "band", main: "#5e3521", mid: "#d5b9ac", low: "#f5f0ed" },
  { type: "total", main: "#fad571", mid: "#f9e09b", low: "#fff7e5", letter: "#d29a10" },
  { type: "total", main: "#93b6f6", mid: "#b5cdf9", low: "#ebf2fe", letter: "#1e62e8" },
];

function BeautifyPane() {
  return (
    <Pane>
      <PaneHead>
        <PaneTitle>对象美化<Caret /></PaneTitle>
        <Spacer />
        <PlainButton $w={28} aria-label="客服"><Icon name="headset" /></PlainButton>
        <PlainButton $w={28} aria-label="设置"><Icon name="gear" /></PlainButton>
        <PlainButton $w={28} aria-label="固定"><Icon name="pin" size={14} /></PlainButton>
        <PlainButton $w={28} aria-label="关闭"><Icon name="close" size={13} weight={1.3} /></PlainButton>
      </PaneHead>
      <Promo>
        <Icon name="bulb" />超级会员买1年送1个月<Spacer />
        <PlainButton $w={24} $color="#777" aria-label="关闭提示"><Icon name="close" size={13} /></PlainButton>
      </Promo>
      <LayoutButton>一键排版</LayoutButton>
      <PaneTabs>
        <PaneTab $on>表格样式</PaneTab>
        <PaneTab>行强调</PaneTab>
        <PaneTab>列强调</PaneTab>
      </PaneTabs>
      <Filter><Icon name="filter" />筛选<Icon name="down" size={12} /></Filter>
      <StyleList>
        <StyleGrid>
          {tableStyles.map((s) => (
            <SwatchButton key={s.main} aria-label="表格样式">
              <Swatch w={112} h={63} radius={4} head={s.main} letter={s.letter || "#fff"}
                rows={patterns[s.type](s)} lines={s.type === "columns" ? "none" : "#ffffff"} headLines
                edge={`${s.letter || s.main}88`} dash={s.type === "columns" || s.type === "cross" ? "#bcbcbc" : "#d6d6d6"}
                firstDash={s.letter} />
            </SwatchButton>
          ))}
        </StyleGrid>
        <ListBar />
      </StyleList>
    </Pane>
  );
}

const SideBar = styled.aside`
  display: flex;
  flex-direction: column;
  align-items: center;
  gap: 8px;
  width: 48px;
  padding: 15px 0 0 6px;
`;

const SideButton = styled.button`
  display: flex;
  align-items: center;
  justify-content: center;
  flex: none;
  width: 32px;
  height: ${(p) => (p.$short ? 17 : 32)}px;
  border-radius: 6px;
  color: #383838;
  background: ${(p) => (p.$on ? "#d0d1d5" : "none")};
`;

const sideIcons = ["pen", "pointer", "sliders", "shop", "magic", "bookSearch", "help", "lock", "code", "tree",
  "omega", "translate", "history", "folderStar", "boxX", "clipImage", "docPerson", "dots"];

/* ---------- status bar ---------- */

const Status = styled.footer`
  display: flex;
  align-items: center;
  flex: none;
  height: 24px;
  padding: 0 9px 0 14px;
  border-top: 1px solid #cdd0d3;
  white-space: nowrap;
`;

const StatusGap = styled.span`
  width: 17px;
`;

const ViewButton = styled(PlainButton)`
  width: 24px;
  height: 22px;
  margin-right: 8px;
  border-radius: 3px;
  background: ${(p) => (p.$on ? "#cdced2" : "none")};
`;

const Zoom = styled.input`
  appearance: none;
  width: 110px;
  height: 12px;
  margin: 0 10px;
  background: linear-gradient(90deg, ${ACCENT} 38%, #b4b6ba 38%) center / 100% 2px no-repeat;
  &::-webkit-slider-thumb {
    appearance: none;
    width: 12px;
    height: 12px;
    border: 4px solid #fff;
    border-radius: 50%;
    background: #8a8a8a;
    box-shadow: 0 0 2px rgba(0, 0, 0, 0.4);
  }
`;

function StatusBar() {
  return (
    <Status>
      页面: 3/3<Rule $h={14} $left={14} $right={12} />
      节: 1/1<Rule $h={14} $left={13} $right={13} />
      列: 1<Rule $h={14} $left={20} $right={12} />
      字数: 40/592<Rule $h={14} $left={14} $right={12} />
      改写: 关闭<StatusGap />修订: 关闭<StatusGap />
      <PlainButton $gap={6}>拼写检查: 打开<Caret /></PlainButton>
      <Rule $h={14} $left={13} $right={12} />
      校对
      <Spacer />
      <PlainButton $w={32} aria-label="护眼模式"><Icon name="eye" /></PlainButton>
      <Rule $h={14} $left={3} $right={9} />
      <ViewButton $on aria-label="页面视图"><Icon name="page" /></ViewButton>
      <ViewButton aria-label="大纲"><Icon name="list" /></ViewButton>
      <ViewButton aria-label="阅读"><Icon name="play" size={14} /></ViewButton>
      <ViewButton aria-label="网页"><Icon name="globe" size={15} /></ViewButton>
      <ViewButton aria-label="写作"><Icon name="marker" size={15} /></ViewButton>
      <Rule $h={14} $right={9} />
      <PlainButton $w={24} aria-label="适应窗口"><Icon name="fit" /></PlainButton>
      <PlainButton $w={62} $gap={15} $left={11}>80%<Caret /></PlainButton>
      <PlainButton $w={20} $left={6} aria-label="缩小"><Icon name="minus" size={12} weight={2.6} /></PlainButton>
      <Zoom type="range" min="0" max="100" defaultValue="37" aria-label="缩放" />
      <PlainButton $w={12} aria-label="放大"><Icon name="plus" size={11} weight={2.6} /></PlainButton>
      <PlainButton $w={16} $left={18} aria-label="全屏"><Icon name="expand" size={15} /></PlainButton>
    </Status>
  );
}

/* ---------- overlays ---------- */

const Annotations = styled.svg`
  position: absolute;
  z-index: 20;
  top: 0;
  left: 0;
  pointer-events: none;
  filter: drop-shadow(2px 3px 2px rgba(0, 0, 0, 0.55));
`;

const Watermark = styled.div`
  position: absolute;
  z-index: 21;
  right: 6px;
  bottom: 3px;
  display: flex;
  align-items: center;
  pointer-events: none;
  opacity: 0.8;
`;

const SiteName = styled.div`
  margin-left: -8px;
  font-size: 21px;
  line-height: 25px;
  font-weight: 700;
  color: #4d8fd0;
  white-space: nowrap;
`;

const SiteUrl = styled.div`
  font-family: "Liberation Sans", sans-serif;
  font-size: 17px;
  line-height: 20px;
  font-weight: 700;
  color: #4bb568;
`;

function Arrow({ tip, tail }) {
  const dx = tail[0] - tip[0];
  const dy = tail[1] - tip[1];
  const len = Math.hypot(dx, dy);
  const angle = (Math.atan2(dy, dx) * 180) / Math.PI;
  return (
    <g transform={`translate(${tip[0]} ${tip[1]}) rotate(${angle})`} fill="#fe0000">
      <path d={`M0 0L27 -6.500L24 -1.500H${len}V1.500H24L27 6.500z`} />
    </g>
  );
}

export default function App() {
  return (
    <Shell>
      <GlobalStyle />
      <TopTabs />
      <Menu />
      <Ribbon />
      <Body>
        <Navigation />
        <Document />
        <BeautifyPane />
        <SideBar>
          <SideButton $short aria-label="收起"><Icon name="minus" weight={1.4} color="#777" /></SideButton>
          {sideIcons.map((n) => (
            <SideButton key={n} $on={n === "magic"} aria-label={n}><Icon name={n} weight={1.1} /></SideButton>
          ))}
        </SideBar>
      </Body>
      <StatusBar />
      <Annotations width="1000" height="500">
        <Arrow tip={[463, 117]} tail={[653, 241]} />
        <Arrow tip={[216, 214]} tail={[540, 247]} />
        <Arrow tip={[920, 78]} tail={[986, 305]} />
        <Arrow tip={[404, 402]} tail={[497, 491]} />
      </Annotations>
      <Watermark>
        <svg width="52" height="42" viewBox="0 0 52 42" fill="none">
          <path d="M43 1C20 0 2 12 1 25c0 8 10 10 18 8C8 32 6 26 11 19 17 10 29 4 43 1z" fill="#4a9ee0" />
          <path d="M40 12c6 8-2 21-22 28 18 2 30-8 29-18 0-5-3-9-7-10z" fill="#66c46a" />
          <path d="M34 9C20 9 11 20 15 26c5 6 16 1 18-6-1 3-7 7-10 4-3-5 4-12 11-15z" fill="#3b7fd0" />
          <path d="M39 13c-4 0-8 2-9 5 5-1 6 4 1 8-4 3-8 4-13 4 12 3 25-4 21-17z" fill="#48b4a0" />
        </svg>
        <SiteName>
          极光下载站
          <SiteUrl>www.xz7.com</SiteUrl>
        </SiteName>
      </Watermark>
    </Shell>
  );
}
